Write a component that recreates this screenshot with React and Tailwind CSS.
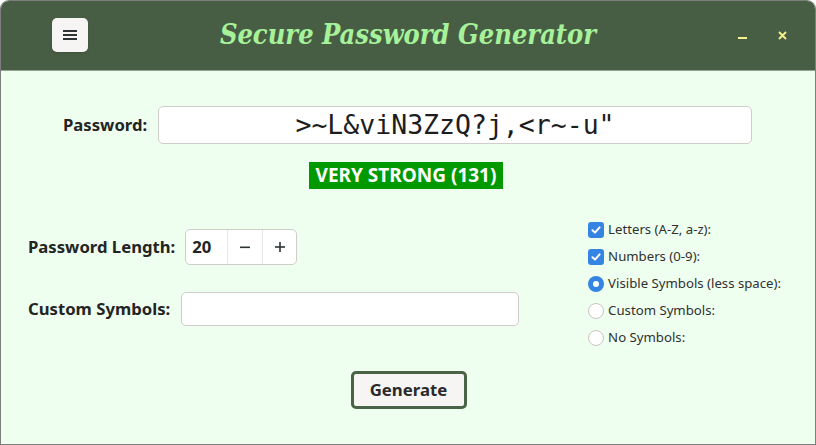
import { useState } from "react"

const sans = { fontFamily: '"Noto Sans", "Open Sans", sans-serif' }

function Check({ checked, radio, label }) {
  return (
    <div className="flex items-center h-[27px] gap-[4px]">
      {radio ? (
        <span
          className={
            checked
              ? "w-[16px] h-[16px] rounded-full bg-[#3584e4] flex items-center justify-center"
              : "w-[16px] h-[16px] rounded-full border border-[#c8c6c2] bg-white"
          }
        >
          {checked && <span className="w-[6px] h-[6px] rounded-full bg-white" />}
        </span>
      ) : (
        <span className="w-[16px] h-[16px] rounded-[3px] bg-[#3584e4] flex items-center justify-center">
          <svg width="12" height="12" viewBox="0 0 12 12" fill="none">
            <path d="M2.5 6.2 L5 8.6 L9.6 3.4" stroke="white" strokeWidth="2" strokeLinecap="round" strokeLinejoin="round" />
          </svg>
        </span>
      )}
      <span className="text-[13.2px] text-[#303030]">{label}</span>
    </div>
  )
}

export default function App() {
  const [length, setLength] = useState(20)

  return (
    <div className="w-[816px] h-[445px] bg-[#7e7e7e] rounded-t-[9px] p-px" style={sans}>
      <div className="w-full h-full flex flex-col rounded-t-[8px] overflow-hidden bg-[#efffef]">
        <div className="h-[70px] bg-[#485e44] border-b border-[#95a592] flex items-center shrink-0 px-[51px]">
          <button className="w-[36px] h-[34px] rounded-[5px] bg-[#f6f5f4] flex items-center justify-center shadow-sm mb-[1px]">
            <svg width="14" height="12" viewBox="0 0 14 12">
              <rect x="0" y="1" width="14" height="2" fill="#2e3436" />
              <rect x="0" y="5" width="14" height="2" fill="#2e3436" />
              <rect x="0" y="9" width="14" height="2" fill="#2e3436" />
            </svg>
          </button>
          <div className="flex-1 text-center">
            <span
              className="text-[27px] font-bold italic text-[#a6f29a] mr-[10px]"
              style={{ fontFamily: '"DejaVu Serif Condensed", "DejaVu Serif", serif', fontStretch: "condensed" }}
            >
              Secure Password Generator
            </span>
          </div>
          <div className="flex items-center gap-[31px] mr-[-23px]">
            <span className="w-[9px] h-[2px] bg-[#f5f28e] mt-[4px]" />
            <svg width="9" height="9" viewBox="0 0 9 9">
              <path d="M1 1 L8 8 M8 1 L1 8" stroke="#f5f28e" strokeWidth="1.8" />
            </svg>
          </div>
        </div>

        <div className="flex-1 flex flex-col">
          <div className="flex items-center mt-[35px] pl-[62px]">
            <span className="text-[16.7px] font-bold text-[#242424] w-[85px]">Password:</span>
            <div
              className="ml-[10px] w-[594px] h-[38px] bg-white border border-[#cfcdca] rounded-[5px] flex items-center justify-center text-[26.5px] text-[#1d1d1d]"
              style={{ fontFamily: '"DejaVu Sans Mono", monospace' }}
            >
              {'>~L&viN3ZzQ?j,<r~-u"'}
            </div>
          </div>

          <div className="flex justify-center mt-[18px] pr-[4px]">
            <span className="h-[27px] px-[7px] bg-[#009a00] text-white text-[19px] font-bold flex items-center">
              VERY STRONG (131)
            </span>
          </div>

          <div className="flex mt-[32px]">
            <div className="flex flex-col pl-[27px] pt-[8px]">
              <div className="flex items-center h-[36px]">
                <span className="text-[16.7px] font-bold text-[#242424]">Password Length:</span>
                <div className="ml-[10px] flex h-[36px] w-[112px] bg-white border border-[#cfcdca] rounded-[5px] overflow-hidden">
                  <span className="w-[42px] flex items-center pl-[6px] text-[16.7px] font-bold text-[#242424] border-r border-[#e8e7e5]">
                    {length}
                  </span>
                  <button
                    onClick={() => setLength(length - 1)}
                    className="w-[35px] flex items-center justify-center border-r border-[#e8e7e5]"
                  >
                    <svg width="10" height="10" viewBox="0 0 10 10">
                      <rect x="0" y="4.5" width="10" height="1.6" fill="#2e3436" />
                    </svg>
                  </button>
                  <button onClick={() => setLength(length + 1)} className="flex-1 flex items-center justify-center">
                    <svg width="10" height="10" viewBox="0 0 10 10">
                      <rect x="0" y="4.2" width="10" height="1.6" fill="#2e3436" />
                      <rect x="4.2" y="0" width="1.6" height="10" fill="#2e3436" />
                    </svg>
                  </button>
                </div>
              </div>
              <div className="flex items-center h-[34px] mt-[27px]">
                <span className="text-[16.7px] font-bold text-[#242424]">Custom Symbols:</span>
                <div className="ml-[11px] w-[338px] h-[34px] bg-white border border-[#cfcdca] rounded-[5px]" />
              </div>
            </div>

            <div className="flex flex-col ml-auto mr-[34px] mt-[-5px]">
              <Check checked label="Letters (A-Z, a-z):" />
              <Check checked label="Numbers (0-9):" />
              <Check radio checked label="Visible Symbols (less space):" />
              <Check radio label="Custom Symbols:" />
              <Check radio label="No Symbols:" />
            </div>
          </div>

          <div className="flex justify-center mt-[20px] pl-[1px]">
            <button className="w-[116px] h-[38px] rounded-[5px] border-[3px] border-[#4a6246] bg-[#f6f5f4] text-[16.8px] font-bold text-[#2a2a2a]">
              Generate
            </button>
          </div>
        </div>
      </div>
    </div>
  )
}
